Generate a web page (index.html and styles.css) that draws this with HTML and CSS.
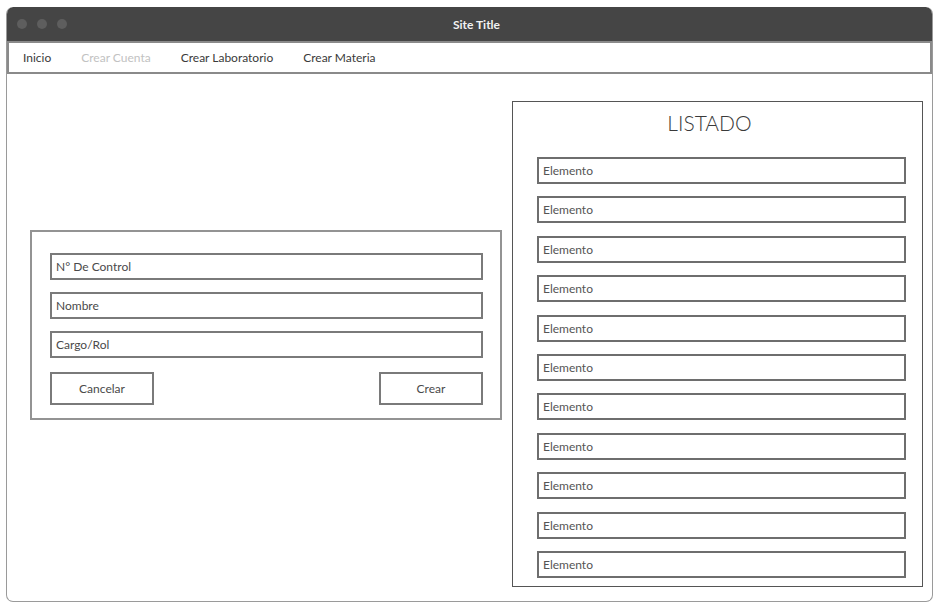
FILE: index.html
```html
<!DOCTYPE html>
<html lang="es">
<head>
<meta charset="utf-8">
<title>Site Title</title>
<link rel="stylesheet" href="styles.css">
</head>
<body>
<div class="window">
  <div class="titlebar">
    <div class="dots"><span class="dot"></span><span class="dot"></span><span class="dot"></span></div>
    <div class="title">Site Title</div>
  </div>
  <nav class="nav">
    <a class="nav-link">Inicio</a>
    <a class="nav-link disabled">Crear Cuenta</a>
    <a class="nav-link">Crear Laboratorio</a>
    <a class="nav-link">Crear Materia</a>
  </nav>
  <main class="content">
    <form class="form-panel">
      <div class="field">N° De Control</div>
      <div class="field">Nombre</div>
      <div class="field">Cargo/Rol</div>
      <div class="actions">
        <button type="button" class="btn">Cancelar</button>
        <button type="button" class="btn">Crear</button>
      </div>
    </form>
    <section class="list-panel">
      <h1 class="list-title">LISTADO</h1>
      <div class="list">
        <div class="item">Elemento</div>
        <div class="item">Elemento</div>
        <div class="item">Elemento</div>
        <div class="item">Elemento</div>
        <div class="item">Elemento</div>
        <div class="item">Elemento</div>
        <div class="item">Elemento</div>
        <div class="item">Elemento</div>
        <div class="item">Elemento</div>
        <div class="item">Elemento</div>
        <div class="item">Elemento</div>
      </div>
    </section>
  </main>
</div>
</body>
</html>
```

FILE: styles.css
```css
* { box-sizing: border-box; }

html, body {
  margin: 0;
  padding: 0;
  background: #ffffff;
}

body {
  padding: 7px 6px 7px 6px;
  font-family: "Lato", "Liberation Sans", sans-serif;
  color: #333;
}

.window {
  width: 927px;
  height: 595px;
  border: 1px solid #9a9a9a;
  border-top: none;
  border-radius: 7px;
  display: flex;
  flex-direction: column;
  overflow: hidden;
}

.titlebar {
  height: 34px;
  background: #454545;
  display: flex;
  align-items: center;
  position: relative;
  margin: 0 -1px;
  border-radius: 7px 7px 0 0;
}

.dots {
  display: flex;
  gap: 10px;
  padding-left: 11px;
}

.dot {
  width: 10px;
  height: 10px;
  border-radius: 50%;
  background: #5e5e5e;
}

.title {
  position: absolute;
  left: 14px;
  right: 0;
  text-align: center;
  color: #f2f2f2;
  font-weight: 700;
  font-size: 12px;
  top: 10px;
}

.nav {
  height: 33px;
  border: 2px solid #8a8a8a;
  display: flex;
  align-items: center;
  padding-left: 14px;
  gap: 30px;
  font-size: 12px;
}

.nav-link {
  color: #3a3a3a;
}

.nav-link.disabled {
  color: #c2c2c2;
}

.content {
  flex: 1;
  display: flex;
  align-items: flex-start;
  padding-left: 23px;
  gap: 10px;
}

.form-panel {
  margin: 156px 0 0 0;
  width: 472px;
  border: 2px solid #939393;
  padding: 21px 17px 13px 18px;
  display: flex;
  flex-direction: column;
  gap: 12px;
}

.field {
  height: 27px;
  border: 2px solid #7a7a7a;
  font-size: 12px;
  color: #4a4a4a;
  padding-left: 4px;
  display: flex;
  align-items: center;
}

.actions {
  display: flex;
  justify-content: space-between;
  margin-top: 2px;
}

.btn {
  width: 104px;
  height: 33px;
  background: #fff;
  border: 2px solid #7a7a7a;
  font-family: inherit;
  font-size: 12px;
  color: #4a4a4a;
  padding: 0;
}

.list-panel {
  margin-top: 27px;
  width: 411px;
  height: 486px;
  border: 1px solid #555;
  padding: 0 16px 0 24px;
}

.list-title {
  margin: 0;
  height: 55px;
  font-size: 21px;
  font-weight: 300;
  color: #3a3a3a;
  text-align: center;
  padding: 8px 24px 0 0;
}

.list {
  display: flex;
  flex-direction: column;
  gap: 12.4px;
}

.item {
  height: 27px;
  border: 2px solid #6e6e6e;
  font-size: 12px;
  color: #555;
  padding-left: 4px;
  display: flex;
  align-items: center;
}
```
